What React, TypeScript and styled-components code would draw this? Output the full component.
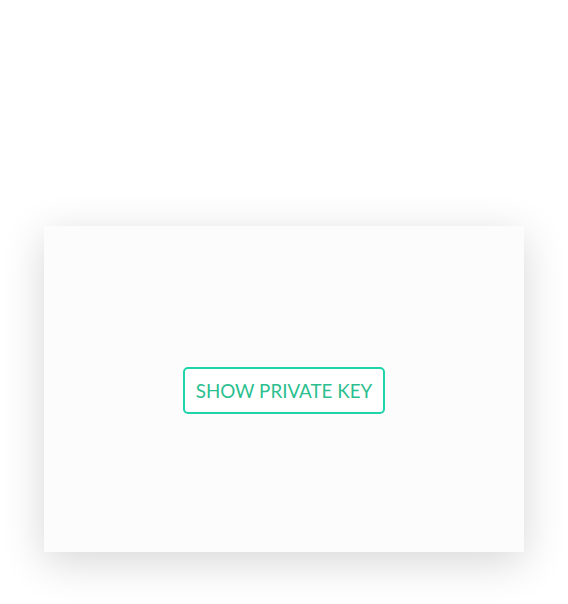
import React from 'react'
import styled, { createGlobalStyle } from 'styled-components'

const GlobalStyle = createGlobalStyle`
  body {
    margin: 0;
    background: #ffffff;
    font-family: Lato, "Open Sans", sans-serif;
  }
`

const Page = styled.div`
  padding: 226px 44px 52px;
`

const Card = styled.div`
  width: 480px;
  height: 326px;
  background: #fcfcfc;
  box-shadow: 0 10px 40px rgba(0, 0, 0, 0.16);
  display: flex;
  align-items: center;
  justify-content: center;
`

const RevealButton = styled.button`
  box-sizing: border-box;
  height: 47px;
  padding: 0 11px;
  margin-top: 3px;
  background: #ffffff;
  border: 2px solid #1fd4aa;
  border-radius: 5px;
  color: #2bbf8f;
  font-family: Lato, "Open Sans", sans-serif;
  font-size: 18.8px;
  cursor: pointer;
`

export default function App() {
  return (
    <>
      <GlobalStyle />
      <Page>
        <Card>
          <RevealButton type="button">SHOW PRIVATE KEY</RevealButton>
        </Card>
      </Page>
    </>
  )
}
